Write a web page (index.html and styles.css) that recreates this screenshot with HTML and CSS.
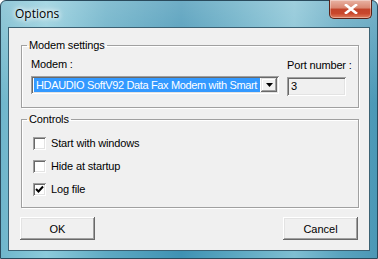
FILE: index.html
```html
<!DOCTYPE html>
<html lang="en">
<head>
    <meta charset="UTF-8">
    <title>Options</title>
    <link rel="stylesheet" href="styles.css">
</head>
<body>
    <div class="window">
        <div class="titlebar">
            <span class="title">Options</span>
            <span class="close">
                <svg width="16" height="10" viewBox="0 0 16 10">
                    <path d="M3 1 L13 9 M13 1 L3 9" stroke="#fff" stroke-width="2.6" stroke-linecap="square"/>
                </svg>
            </span>
        </div>
        <div class="client">
            <fieldset class="group group-modem">
                <legend>Modem settings</legend>
                <div class="modem-row">
                    <div class="col col-modem">
                        <label class="lbl">Modem :</label>
                        <div class="combo">
                            <div class="combo-value"><span class="sel">HDAUDIO SoftV92 Data Fax Modem with Smart</span></div>
                            <div class="combo-btn">
                                <svg width="7" height="4" viewBox="0 0 7 4"><path d="M0 0 H7 L3.5 4 Z" fill="#000"/></svg>
                            </div>
                        </div>
                    </div>
                    <div class="col col-port">
                        <label class="lbl">Port number :</label>
                        <div class="textbox">3</div>
                    </div>
                </div>
            </fieldset>

            <fieldset class="group group-controls">
                <legend>Controls</legend>
                <div class="check-row"><span class="check"></span>Start with windows</div>
                <div class="check-row"><span class="check"></span>Hide at startup</div>
                <div class="check-row"><span class="check checked">
                    <svg width="9" height="9" viewBox="0 0 9 9"><path d="M1 4 L3.5 6.5 L8 1.5" fill="none" stroke="#000" stroke-width="2"/></svg>
                </span>Log file</div>
            </fieldset>

            <div class="buttons">
                <button class="btn">OK</button>
                <button class="btn">Cancel</button>
            </div>
        </div>
    </div>
</body>
</html>
```

FILE: styles.css
```css
* {
    margin: 0;
    padding: 0;
    box-sizing: border-box;
}
body {
    width: 378px;
    height: 259px;
    overflow: hidden;
    background: #fff;
}
.window {
    width: 378px;
    height: 259px;
    display: flex;
    flex-direction: column;
    padding: 0 7px 7px;
    border: 1px solid #2a4a5c;
    border-radius: 6px 6px 0 0;
    background:
        linear-gradient(180deg, rgba(255,255,255,0.25), rgba(255,255,255,0) 40%),
        linear-gradient(90deg, #6fb6cb 0%, #8ccbdb 12%, #5eaac3 28%, #3f92b3 48%, #5ba7c1 62%, #7fbfd2 78%, #5aa4bf 90%, #4b98b6 100%);
}
/* 标题栏 */
.titlebar {
    height: 26px;
    position: relative;
    display: flex;
    align-items: center;
    padding-left: 7px;
}
.title {
    font-family: "Open Sans", "Noto Sans", sans-serif;
    font-size: 12px;
    color: #000;
    text-shadow: 0 0 6px #fff, 0 0 4px #fff, 0 0 8px rgba(255,255,255,0.8);
    margin-top: -2px;
}
.close {
    position: absolute;
    top: -1px;
    right: -2px;
    width: 43px;
    height: 19px;
    border: 1px solid #5a2218;
    border-top: none;
    border-radius: 0 0 5px 5px;
    background: linear-gradient(180deg, #e9b3a4 0%, #d98670 45%, #c2432a 50%, #c9472c 75%, #e0805f 100%);
    box-shadow: inset 0 0 0 1px rgba(255,255,255,0.35);
    display: flex;
    align-items: center;
    justify-content: center;
}
/* 客户区 */
.client {
    flex: 1;
    background: #f0f0f0;
    border: 1px solid #3b6173;
    padding: 11px 10px 0 12px;
    font-family: "Liberation Sans", Arial, sans-serif;
    font-size: 11px;
    letter-spacing: -0.15px;
    color: #000;
}
.group {
    border: 1px solid #a0a0a0;
    box-shadow: inset 1px 1px 0 #fff, 1px 1px 0 #fff;
    padding: 0 8px 0 9px;
}
.group legend {
    padding: 0 2px;
    margin-left: -4px;
    line-height: 13px;
}
.group-modem {
    height: 69px;
}
.modem-row {
    display: flex;
    gap: 8px;
    margin-top: 6px;
}
.col {
    display: flex;
    flex-direction: column;
}
.col-modem {
    width: 248px;
}
.col-port {
    width: 59px;
    margin-top: 1px;
}
.lbl {
    line-height: 13px;
    margin-bottom: 5px;
    white-space: nowrap;
}
.combo {
    height: 18px;
    display: flex;
    padding: 2px;
    background: #fff;
    box-shadow: inset 1px 1px 0 #a0a0a0, inset -1px -1px 0 #fff, inset 2px 2px 0 #696969, inset -2px -2px 0 #e3e3e3;
}
.combo-value {
    flex: 1;
    min-width: 0;
    overflow: hidden;
    white-space: nowrap;
    padding: 0 1px;
}
.sel {
    display: block;
    background: #3399ff;
    color: #fff;
    line-height: 14px;
    padding-left: 2px;
    letter-spacing: -0.35px;
    overflow: hidden;
}
.combo-btn {
    width: 16px;
    background: #f0f0f0;
    display: flex;
    align-items: center;
    justify-content: center;
    box-shadow: inset -1px -1px 0 #696969, inset 1px 1px 0 #e3e3e3, inset -2px -2px 0 #a0a0a0, inset 2px 2px 0 #fff;
}
.textbox {
    height: 19px;
    background: #f0f0f0;
    padding: 3px 4px;
    line-height: 13px;
    box-shadow: inset 1px 1px 0 #a0a0a0, inset -1px -1px 0 #fff, inset 2px 2px 0 #696969, inset -2px -2px 0 #e3e3e3;
}
.group-controls {
    margin-top: 5px;
    height: 95px;
    padding-top: 11px;
}
.check-row {
    display: flex;
    align-items: center;
    line-height: 13px;
    margin-bottom: 10px;
    padding-left: 2px;
}
.check {
    width: 13px;
    height: 13px;
    margin-right: 5px;
    background: #fff;
    display: flex;
    align-items: center;
    justify-content: center;
    box-shadow: inset 1px 1px 0 #a0a0a0, inset -1px -1px 0 #fff, inset 2px 2px 0 #696969, inset -2px -2px 0 #e3e3e3;
}
/* 按钮 */
.buttons {
    display: flex;
    justify-content: space-between;
    margin: 9px 1px 0 -1px;
}
.btn {
    width: 75px;
    height: 23px;
    font-family: "Liberation Sans", Arial, sans-serif;
    font-size: 11px;
    color: #000;
    background: #f0f0f0;
    border: none;
    box-shadow: inset -1px -1px 0 #696969, inset 1px 1px 0 #fff, inset -2px -2px 0 #a0a0a0, inset 2px 2px 0 #e3e3e3;
}
```
